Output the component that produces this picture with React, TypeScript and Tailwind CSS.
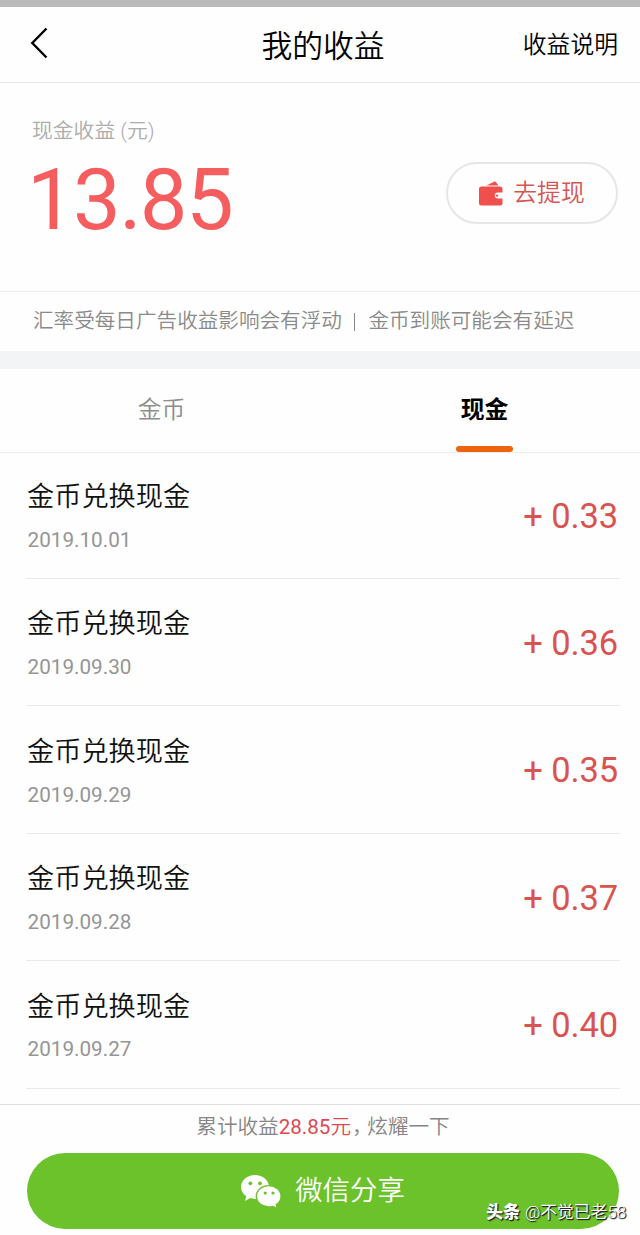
const cjk = "font-[Roboto,'Noto_Sans_CJK_SC',sans-serif]";

const records = [
  { date: "2019.10.01", amount: "0.33" },
  { date: "2019.09.30", amount: "0.36" },
  { date: "2019.09.29", amount: "0.35" },
  { date: "2019.09.28", amount: "0.37" },
  { date: "2019.09.27", amount: "0.40" },
];

function WalletIcon() {
  return (
    <svg className="h-[25px] w-6 shrink-0" viewBox="0 0 24 25" fill="#ef4f4d">
      <path d="M7.500 4.600 14.600.9c1.200-.6 2-.4 2.600.5l2.200 3.200z" />
      <path d="M2.500 5.400h18.500a2.500 2.500 0 0 1 2.500 2.500v3.700h-4.700a3 3 0 0 0 0 6h4.700V22a2.500 2.500 0 0 1-2.500 2.500H2.500A2.500 2.500 0 0 1 0 22V7.900a2.500 2.500 0 0 1 2.500-2.500z" />
      <circle cx="18" cy="14.600" r="1.200" />
    </svg>
  );
}

function WechatIcon() {
  return (
    <svg className="h-[33px] w-10 shrink-0" viewBox="0 0 40 33">
      <path
        fill="#fff"
        d="M14 0C6.300 0 0 5.200 0 12c0 3.900 2.100 7.200 5.300 9.300L4 26l5.200-2.900c1.500.5 3.100.8 4.800.8 7.700 0 14-5.200 14-11.900S21.700 0 14 0z"
      />
      <path
        fill="#fff"
        stroke="#6cc22b"
        strokeWidth="1.400"
        d="M27.700 10.600c-6.900 0-12.400 4.700-12.400 10.700s5.500 10.700 12.400 10.700c1.500 0 2.900-.2 4.200-.6l4.500 2.200-1.100-4c2.900-1.900 4.800-4.900 4.800-8.300 0-6-5.500-10.700-12.400-10.700z"
      />
      <g fill="#6cc22b">
        <circle cx="9.400" cy="8.300" r="1.900" />
        <circle cx="19" cy="8.300" r="1.900" />
        <circle cx="24.200" cy="18" r="1.600" />
        <circle cx="32" cy="18" r="1.600" />
      </g>
    </svg>
  );
}

export default function App() {
  return (
    <div className={`${cjk} relative flex h-[1235px] w-[640px] flex-col overflow-hidden bg-[#fefefe] leading-none whitespace-nowrap font-[350] text-black`}>
      <div className="h-[7px] shrink-0 bg-[#bababa]" />
      <header className="grid h-[76px] shrink-0 grid-cols-[1fr_auto_1fr] items-center border-b border-[#e6e6e6] pr-[22px] pl-[28px]">
        <svg className="mb-1 h-[32px] w-[20px]" viewBox="0 0 20 32" fill="none" stroke="#000" strokeWidth="2.400">
          <path d="M18.500 1.500 4.300 16l14.200 14.500" />
        </svg>
        <h1 className="pt-[6px] text-[30.800px]">我的收益</h1>
        <span className="justify-self-end pt-[2px] text-[23.800px]">收益说明</span>
      </header>

      <section className="flex h-[209px] shrink-0 items-start justify-between border-b border-[#ececec] pr-[22px] pl-8">
        <div className="pt-[38px]">
          <div className="text-[20.800px] text-[#acacac]">现金收益 (元)</div>
          <div className="-ml-[5px] pt-[16.500px] text-[85px] font-normal tracking-[-1.700px] text-[#f55d5f]">13.85</div>
        </div>
        <button className="mt-[79px] flex h-[62px] w-[172px] items-center justify-center gap-[10px] rounded-full border-2 border-[#e6e6e6] text-[23.800px] text-[#d75455]">
          <WalletIcon />
          <span className="pt-[2px]">去提现</span>
        </button>
      </section>

      <p className="flex h-[59px] shrink-0 items-center pl-[33px] text-[20.600px] text-[#8a8a8a]">
        <span>汇率受每日广告收益影响会有浮动</span>
        <span className="mr-[13px] ml-[12px] h-[18px] w-[1.500px] bg-[#858585]" />
        <span>金币到账可能会有延迟</span>
      </p>
      <div className="h-[18px] shrink-0 bg-[#f3f4f6]" />

      <nav className="flex h-[84px] shrink-0 border-b border-[#ececec] text-[23.800px]">
        <div className="w-[323px] shrink-0 pt-[30px] text-center text-[#8d8d8d]">金币</div>
        <div className="flex w-[323px] shrink-0 flex-col items-center justify-between pt-[30px] font-bold">
          <span>现金</span>
          <span className="h-[6px] w-[57px] rounded-full bg-[#ed640f]" />
        </div>
      </nav>

      <ul className="h-[651px] shrink-0 overflow-hidden pr-5 pl-[26px]">
        {records.map((r) => (
          <li key={r.date} className="flex h-[127.400px] items-start justify-between border-b border-[#e9e9e9] first:h-[126px] first:*:-mt-px">
            <div className="pt-[32.400px] pl-px">
              <div className="text-[27.200px] text-[#111]">金币兑换现金</div>
              <div className="pt-[18.600px] pl-[0.500px] text-[20.700px] font-normal text-[#959595]">{r.date}</div>
            </div>
            <div className="pt-[46.800px] pr-0.5 text-[34.500px] font-normal tracking-[-0.100px] text-[#d95350]">+ {r.amount}</div>
          </li>
        ))}
      </ul>

      <footer className="flex h-[131px] shrink-0 flex-col items-center border-t border-[#e0e0e0] pl-[6px]">
        <div className="flex h-[48px] items-center pb-[3px] text-[20.600px] text-[#858585]">
          <span>累计收益</span>
          <span className="text-[#db4a52]"><span className="font-normal">28.85</span>元</span>
          <span className="mr-[5px] ml-px [font-feature-settings:'halt']">，</span>
          <span>炫耀一下</span>
        </div>
        <button className="flex h-[76px] w-[592px] items-center justify-center gap-[14px] rounded-full bg-[#6cc22b] text-[27.400px] text-white">
          <WechatIcon />
          <span className="pt-[2px]">微信分享</span>
        </button>
      </footer>

      <div className="absolute right-[14px] bottom-[14px] flex items-center gap-[5px] text-[16.800px] text-white [text-shadow:1px_1px_1px_#222,1px_1px_1px_#333]">
        <span className="font-black">头条</span>
        <span>@不觉已老58</span>
      </div>
    </div>
  );
}
